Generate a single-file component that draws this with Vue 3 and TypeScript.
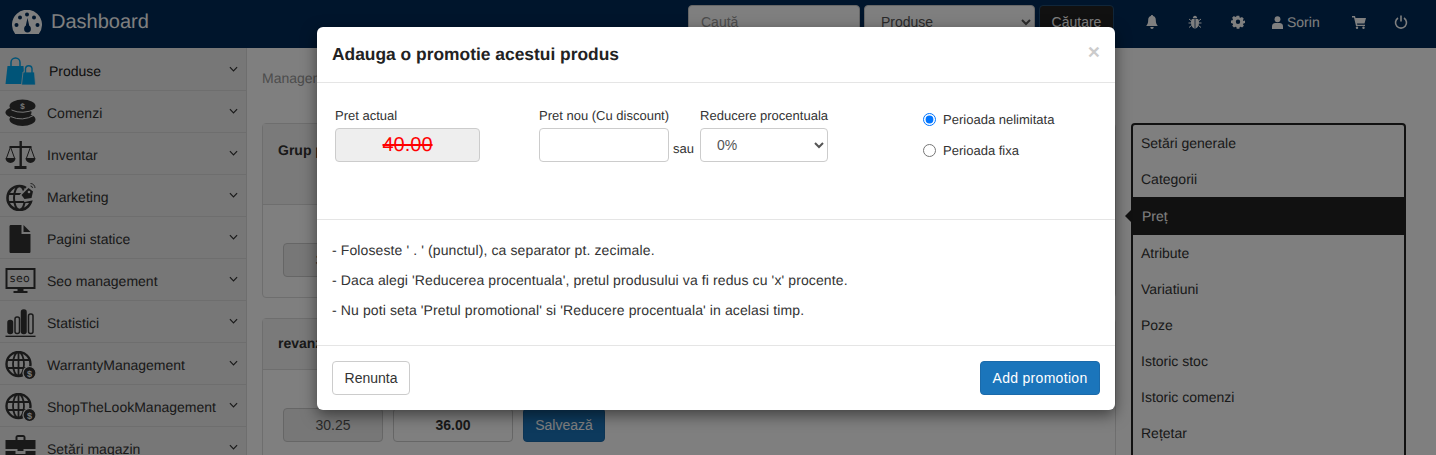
<script setup lang="ts">
import { ref } from 'vue';

interface MenuItem {
  label: string;
  icon: string;
  active?: boolean;
}

const menu: MenuItem[] = [
  { label: 'Produse', icon: 'bags', active: true },
  { label: 'Comenzi', icon: 'coins' },
  { label: 'Inventar', icon: 'scale' },
  { label: 'Marketing', icon: 'globeTag' },
  { label: 'Pagini statice', icon: 'page' },
  { label: 'Seo management', icon: 'seo' },
  { label: 'Statistici', icon: 'bars' },
  { label: 'WarrantyManagement', icon: 'globeMoney' },
  { label: 'ShopTheLookManagement', icon: 'globeMoney' },
  { label: 'Setări magazin', icon: 'case' },
];

const tabs = ['Setări generale', 'Categorii', 'Preț', 'Atribute', 'Variatiuni', 'Poze', 'Istoric stoc', 'Istoric comenzi', 'Rețetar'];
const notes = [
  "- Foloseste ' . ' (punctul), ca separator pt. zecimale.",
  "- Daca alegi 'Reducerea procentuala', pretul produsului va fi redus cu 'x' procente.",
  "- Nu poti seta 'Pretul promotional' si 'Reducere procentuala' in acelasi timp.",
];

const period = ref('nelimitata');
</script>

<template>
  <div class="page">
    <header class="topbar">
      <div class="brand">
        <svg class="brand-icon" viewBox="0 0 30 24">
          <path d="M3.200 24 A15 15 0 1 1 26.800 24 Z" fill="currentColor" />
          <g fill="#002a58">
            <circle cx="4.500" cy="15" r="2" /><circle cx="8" cy="7.500" r="2" /><circle cx="15" cy="4.500" r="2" />
            <circle cx="22" cy="7.500" r="2" /><circle cx="25.500" cy="15" r="2" />
            <path d="M13 19 L15.500 8 L18 19 Z" /><circle cx="15.500" cy="19" r="3.400" />
          </g>
        </svg>
        <span>Dashboard</span>
      </div>
      <div class="search">
        <input class="search-input" placeholder="Caută" />
        <select class="search-select"><option>Produse</option></select>
        <button class="search-btn">Căutare</button>
      </div>
      <nav class="top-icons">
        <svg class="ti" viewBox="0 0 14 14"><path d="M7 0c.7 0 1.100.5 1.100 1.100C10 1.600 10.800 3 10.800 5c0 3 .7 4.500 2 6H1.200c1.300-1.500 2-3 2-6 0-2 .8-3.400 2.700-3.900C5.900.5 6.300 0 7 0zM5.300 12h3.400c0 1.100-.8 2-1.700 2s-1.700-.9-1.700-2z" fill="currentColor"/></svg>
        <svg class="ti" viewBox="0 0 14 14"><path d="M4.800 3.200C4.800 1.800 5.800.8 7 .8s2.200 1 2.200 2.400zM4 4h6c.8 1 1 2 1 3.500C11 11 9.200 13.500 7 13.500S3 11 3 7.500C3 6 3.200 5 4 4z" fill="currentColor"/><path d="M1 4l2.500 2M13 4l-2.500 2M.5 8h2.500M13.500 8H11M1 12.500l2.500-2M13 12.500l-2.500-2" stroke="currentColor" stroke-width="1" fill="none"/><path d="M7 4v9.500" stroke="#002a58" stroke-width=".8"/></svg>
        <svg class="ti" viewBox="0 0 14 14"><path fill-rule="evenodd" d="M5.700 1h2.600l.3 1.600 1 .4 1.400-.9 1.800 1.800-.9 1.400.4 1L14 5.700v2.600l-1.600.3-.4 1 .9 1.400-1.800 1.800-1.400-.9-1 .4-.3 1.600H5.700l-.3-1.600-1-.4-1.400.9-1.800-1.800.9-1.400-.4-1L0 8.300V5.700l1.600-.3.4-1-.9-1.400L2.900 1.200l1.400.9 1-.4zM7 4.800a2.200 2.200 0 1 0 0 4.400 2.200 2.200 0 0 0 0-4.400z" fill="currentColor" transform="translate(0 -.2)"/></svg>
        <span class="user">
          <svg class="user-icon" viewBox="0 0 12 14"><circle cx="6" cy="3.500" r="3.200" fill="currentColor"/><path d="M0 14v-3c0-2.500 2-3.500 3.500-3.500h5c1.500 0 3.500 1 3.500 3.500v3z" fill="currentColor"/></svg>
          Sorin
        </span>
        <svg class="ti cart" viewBox="0 0 14 14"><path d="M0 1h3l.5 2H14l-1.500 5.500H5l.3 1.200H13V11H4L2 2.400H0z" fill="currentColor"/><circle cx="5" cy="12.700" r="1.200" fill="currentColor"/><circle cx="11.500" cy="12.700" r="1.200" fill="currentColor"/></svg>
        <svg class="ti power" viewBox="0 0 14 14"><path d="M4 3a5.500 5.500 0 1 0 6 0" fill="none" stroke="currentColor" stroke-width="1.600"/><path d="M7 .5v6" stroke="currentColor" stroke-width="1.600"/></svg>
      </nav>
    </header>

    <div class="layout">
      <aside class="sidebar">
        <div v-for="item in menu" :key="item.label" class="menu-item" :class="{ active: item.active }">
          <svg class="menu-icon" viewBox="0 0 30 28">
            <g v-if="item.icon === 'bags'">
              <path d="M0 27 L2 9 H18 L19 27 Z" fill="#00a8f0" />
              <path d="M5.500 10 V5.500 a4.500 4.500 0 0 1 9 0 V10" fill="none" stroke="#00a8f0" stroke-width="1.500" />
              <path d="M16 28 L17.500 15 H29 L30 28 Z" fill="#00a8f0" stroke="#eee" stroke-width=".8" />
              <path d="M20 16 V11.500 a3.300 3.300 0 0 1 6.500 0 V16" fill="none" stroke="#00a8f0" stroke-width="1.400" />
            </g>
            <g v-else-if="item.icon === 'coins'" fill="#333">
              <ellipse cx="17" cy="7" rx="13" ry="6.500" />
              <ellipse cx="13" cy="13.500" rx="13" ry="6" />
              <ellipse cx="17" cy="20.500" rx="13" ry="6.500" />
              <path d="M6 11 Q17 16 30 10" fill="none" stroke="#eee" stroke-width="1" />
              <path d="M5 17.500 Q17 23 29 16" fill="none" stroke="#eee" stroke-width="1" />
              <text x="17" y="9.500" font-size="8" font-weight="700" text-anchor="middle" fill="#eee" font-family="Liberation Sans">$</text>
            </g>
            <g v-else-if="item.icon === 'scale'" fill="#333">
              <path d="M14 0h2.400v25H21v3H9v-3h5zM4 5h22v2H4z" />
              <path d="M0 17h10a5 5 0 0 1-10 0zM20 17h10a5 5 0 0 1-10 0z" />
              <path d="M5 6 L1 17 M5 6 L9 17 M25 6 L21 17 M25 6 L29 17" stroke="#333" stroke-width="1" fill="none" />
            </g>
            <g v-else-if="item.icon === 'globeTag'">
              <circle cx="14" cy="15" r="12" fill="none" stroke="#333" stroke-width="2.600" />
              <ellipse cx="14" cy="15" rx="5.500" ry="12" fill="none" stroke="#333" stroke-width="2" />
              <path d="M2 11h24M2 19h24" stroke="#333" stroke-width="2" />
              <path d="M14 12 L23 2 L30 6 L29 17 L19 19 Z" fill="#eee" />
              <path d="M16 12 L23 5 L27.500 8.500 L26 15 L19 16 Z" fill="#333" />
              <circle cx="23.500" cy="9" r="1.300" fill="#eee" />
              <path d="M25 .5a4.500 4.500 0 0 1 4.500 4.500M25 3a2 2 0 0 1 2 2" fill="none" stroke="#333" stroke-width=".9" />
            </g>
            <g v-else-if="item.icon === 'page'" fill="#333">
              <path d="M4 1.500 C4 .5 4.500 0 5.500 0 H16 V9 H25 V26.500 C25 27.500 24.500 28 23.500 28 H5.500 C4.500 28 4 27.500 4 26.500Z" />
              <path d="M18 0 L25 7 H18 Z" />
            </g>
            <g v-else-if="item.icon === 'seo'">
              <rect x="1" y="2" width="28" height="19" fill="none" stroke="#333" stroke-width="2" />
              <text x="14.500" y="15" font-size="11" letter-spacing=".4" text-anchor="middle" fill="#333" font-family="DejaVu Sans">seo</text>
              <path d="M12 21h6v3h4v2H8v-2h4z" fill="#333" />
            </g>
            <g v-else-if="item.icon === 'bars'" fill="none" stroke="#333" stroke-width="1.500">
              <rect x="2.500" y="11.500" width="4.500" height="13" rx="2" fill="#333" />
              <rect x="9.500" y="8" width="4.500" height="16.500" rx="2" />
              <rect x="16" y="1" width="4.500" height="23.500" rx="2" fill="#333" />
              <rect x="23" y="5" width="4.500" height="19.500" rx="2" />
              <path d="M0 27.500h30" stroke-width="1.700" />
            </g>
            <g v-else-if="item.icon === 'globeMoney'">
              <circle cx="13" cy="13" r="12" fill="none" stroke="#333" stroke-width="2.400" />
              <ellipse cx="13" cy="13" rx="5.500" ry="12" fill="none" stroke="#333" stroke-width="1.800" />
              <path d="M2 9h22M2 17h22M13 1v24" stroke="#333" stroke-width="1.800" />
              <circle cx="24" cy="22" r="6.500" fill="#333" stroke="#eee" stroke-width="1.200" />
              <text x="24" y="25.500" font-size="9" font-weight="700" text-anchor="middle" fill="#eee" font-family="Liberation Sans">$</text>
            </g>
            <g v-else fill="#333">
              <path d="M10 5V2.500C10 1 11 0 12.500 0h5C19 0 20 1 20 2.500V5h-2V2h-6v3z" />
              <path d="M0 5h30v9H18v2h-6v-2H0zM0 16h10v3h10v-3h10v11H0z" />
            </g>
          </svg>
          <span class="menu-label">{{ item.label }}</span>
          <svg class="chevron" viewBox="0 0 10 6"><path d="M1 1l4 4 4-4" fill="none" stroke="currentColor" stroke-width="1.300"/></svg>
        </div>
      </aside>

      <main class="content">
        <div class="crumb">Management produs</div>
        <div class="columns">
          <div class="cards">
            <section class="card first">
              <div class="card-head">Grup preturi</div>
              <div class="card-body">
                <div class="field">
                  <label>Pret</label>
                  <input class="price" disabled value="33.06" />
                </div>
              </div>
            </section>
            <section class="card">
              <div class="card-head short">revanzator</div>
              <div class="card-body">
                <div class="field">
                  <label>Pret</label>
                  <input class="price" disabled value="30.25" />
                </div>
                <div class="field">
                  <label>&nbsp;</label>
                  <input class="price wide" value="36.00" />
                </div>
                <button class="save">Salvează</button>
              </div>
            </section>
          </div>
          <ul class="tabs">
            <li v-for="t in tabs" :key="t" :class="{ current: t === 'Preț' }">{{ t }}</li>
          </ul>
        </div>
      </main>
    </div>

    <div class="backdrop"></div>

    <div class="modal">
      <div class="modal-head">
        <h4>Adauga o promotie acestui produs</h4>
        <span class="close">×</span>
      </div>
      <div class="modal-body">
        <div class="m-field current-price">
          <label>Pret actual</label>
          <div class="old-price"><s>40.00</s></div>
        </div>
        <div class="m-field new-price">
          <label>Pret nou (Cu discount)</label>
          <input class="m-input" />
        </div>
        <span class="sau">sau</span>
        <div class="m-field discount">
          <label>Reducere procentuala</label>
          <select class="m-select"><option>0%</option></select>
        </div>
        <div class="radios">
          <label class="radio"><input v-model="period" type="radio" value="nelimitata" /> Perioada nelimitata</label>
          <label class="radio"><input v-model="period" type="radio" value="fixa" /> Perioada fixa</label>
        </div>
      </div>
      <div class="modal-notes">
        <p v-for="n in notes" :key="n">{{ n }}</p>
      </div>
      <div class="modal-foot">
        <button class="btn-cancel">Renunta</button>
        <button class="btn-add">Add promotion</button>
      </div>
    </div>
  </div>
</template>

<style>
html, body { margin: 0; overflow: hidden; }
</style>

<style scoped>
* { box-sizing: border-box; }
.page {
  width: 1436px;
  height: 455px;
  overflow: hidden;
  position: relative;
  font-family: "Liberation Sans", Arial, sans-serif;
  font-size: 14px;
  color: #333;
  background: #fff;
  text-rendering: geometricPrecision;
}
.topbar {
  height: 48px;
  background: #002a58;
  display: flex;
  align-items: flex-start;
  color: #fff;
}
.brand {
  width: 688px;
  display: flex;
  align-items: center;
  height: 44px;
  padding-left: 12px;
  font-size: 20px;
  gap: 9px;
}
.brand-icon { width: 30px; height: 24px; margin-top: -1px; }
.search { display: flex; padding-top: 5px; }
.search-input, .search-select {
  height: 34px;
  border: 1px solid #ccc;
  border-radius: 4px;
  background: #fff;
  font: 14px "Liberation Sans", Arial, sans-serif;
  color: #555;
}
.search-input { width: 172px; padding: 6px 12px; margin-right: 4px; }
.search-input::placeholder { color: #999; }
.search-select { width: 171px; padding: 6px 12px; margin-right: 4px; }
.search-btn {
  width: 75px;
  height: 34px;
  background: #222;
  border: 1px solid #204d74;
  border-radius: 4px;
  color: #fff;
  font: 14px "Liberation Sans", Arial, sans-serif;
}
.top-icons {
  display: flex;
  align-items: center;
  height: 44px;
  color: #fff;
  margin-left: 31px;
}
.ti { width: 14px; height: 14px; margin-right: 29px; }
.user { display: flex; align-items: center; gap: 4px; font-size: 14px; width: 56px; margin: 0 24px 0 -2px; }
.user-icon { width: 11px; height: 13px; }
.cart { margin-right: 28px; }
.power { margin-right: 0; }

.layout { display: flex; height: 407px; }
.sidebar {
  width: 247px;
  flex: none;
  background: #eee;
  border-right: 1px solid #ddd;
  overflow: hidden;
  padding-top: 1px;
}
.menu-item {
  height: 42px;
  display: flex;
  align-items: center;
  padding: 3px 0 0 5px;
  border-bottom: 1px solid #ddd;
  position: relative;
}
.menu-icon { width: 31px; height: 28px; flex: none; margin-right: 11px; }
.menu-label { flex: 1; font-size: 14px; color: #333; }
.active .menu-label { color: #222; margin-left: 2px; }
.chevron { width: 9px; height: 6px; margin-right: 8px; color: #333; margin-top: -4px; }

.content { flex: 1; padding: 0 30px 0 15px; min-width: 0; }
.crumb { height: 75px; padding-top: 22px; color: #999; }
.columns { display: flex; gap: 15px; }
.cards { width: 854px; flex: none; display: flex; flex-direction: column; gap: 20px; }
.card { border: 1px solid #ddd; border-radius: 4px; background: #fff; }
.card-head {
  height: 81px;
  padding: 18px 15px;
  background: #f5f5f5;
  border-bottom: 1px solid #ddd;
  font-weight: 700;
  font-size: 14px;
}
.card-head.short { height: 51px; padding-top: 16px; }
.card-body { display: flex; gap: 10px; padding: 18px 20px 20px; align-items: flex-end; height: 92px; }
.field { display: flex; flex-direction: column; align-items: center; gap: 5px; }
.field label { font-weight: 700; }
.price {
  width: 100px;
  height: 34px;
  border: 1px solid #ccc;
  border-radius: 4px;
  background: #eee;
  text-align: center;
  font: 14px "Liberation Sans", Arial, sans-serif;
  color: #555;
}
.price.wide { width: 120px; background: #fff; font-weight: 700; color: #333; }
.save {
  width: 82px;
  height: 34px;
  background: #1b75bb;
  border: 1px solid #1b6aaa;
  border-radius: 4px;
  color: #fff;
  font: 14px "Liberation Sans", Arial, sans-serif;
}
.tabs {
  list-style: none;
  margin: 0;
  padding: 0;
  width: 275px;
  height: 500px;
  flex: none;
  border: 2px solid #222;
  border-radius: 4px;
  background: #fff;
}
.tabs li { height: 36px; line-height: 36px; padding-left: 8px; color: #333; }
.tabs li.current {
  height: 38px;
  line-height: 38px;
  padding-left: 9px;
  background: #222;
  color: #fff;
  position: relative;
}
.tabs li.current::before {
  content: "";
  position: absolute;
  left: -8px;
  top: 13px;
  border-style: solid;
  border-width: 6px 6px 6px 0;
  border-color: transparent #222 transparent transparent;
}

.backdrop { position: absolute; inset: 0; background: rgba(0, 0, 0, 0.5); }
.modal {
  position: absolute;
  left: 317px;
  top: 27px;
  width: 798px;
  height: 383px;
  background: #fff;
  border-radius: 6px;
  box-shadow: 0 5px 15px rgba(0, 0, 0, 0.5);
  display: flex;
  flex-direction: column;
}
.modal-head {
  height: 56px;
  flex: none;
  padding: 0 15px;
  display: flex;
  align-items: center;
  justify-content: space-between;
  border-bottom: 1px solid #e5e5e5;
}
.modal-head h4 { margin: 0; font-size: 17.4px; font-weight: 700; color: #222; }
.close { font-size: 21px; font-weight: 700; color: #000; opacity: 0.2; margin-top: -4px; }
.modal-body {
  height: 137px;
  flex: none;
  display: flex;
  padding: 25px 18px 0;
  border-bottom: 1px solid #e5e5e5;
  align-items: flex-start;
  font-size: 13px;
}
.m-field { display: flex; flex-direction: column; gap: 5px; }
.m-field label { height: 15px; line-height: 15px; }
.current-price { width: 204px; }
.old-price {
  width: 145px;
  height: 34px;
  border: 1px solid #ccc;
  border-radius: 4px;
  background: #eee;
  color: #f00;
  font-size: 20px;
  text-align: center;
  line-height: 32px;
}
.m-input {
  width: 130px;
  height: 34px;
  border: 1px solid #ccc;
  border-radius: 4px;
}
.sau { width: 31px; padding: 33px 0 0 4px; }
.m-select {
  width: 128px;
  height: 34px;
  border: 1px solid #ccc;
  border-radius: 4px;
  background: #fff;
  color: #555;
  font: 14px "Liberation Sans", Arial, sans-serif;
  padding: 6px 12px;
}
.radios { margin-left: 95px; display: flex; flex-direction: column; gap: 16px; padding-top: 4px; }
.radio { display: flex; align-items: center; gap: 7px; height: 15px; }
.radio input { margin: 0; width: 13px; height: 13px; }
.modal-notes {
  height: 126px;
  flex: none;
  padding: 22px 15px 0;
  border-bottom: 1px solid #e5e5e5;
}
.modal-notes p { margin: 0 0 14px; line-height: 16px; letter-spacing: 0.11px; }
.modal-foot {
  flex: 1;
  display: flex;
  justify-content: space-between;
  align-items: flex-start;
  padding: 15px;
}
.btn-cancel, .btn-add {
  height: 34px;
  border-radius: 4px;
  font: 14px "Liberation Sans", Arial, sans-serif;
}
.btn-cancel { width: 78px; background: #fff; border: 1px solid #ccc; color: #333; }
.btn-add { width: 120px; background: #1b75bb; border: 1px solid #1b6aaa; color: #fff; letter-spacing: 0.3px; }
</style>
